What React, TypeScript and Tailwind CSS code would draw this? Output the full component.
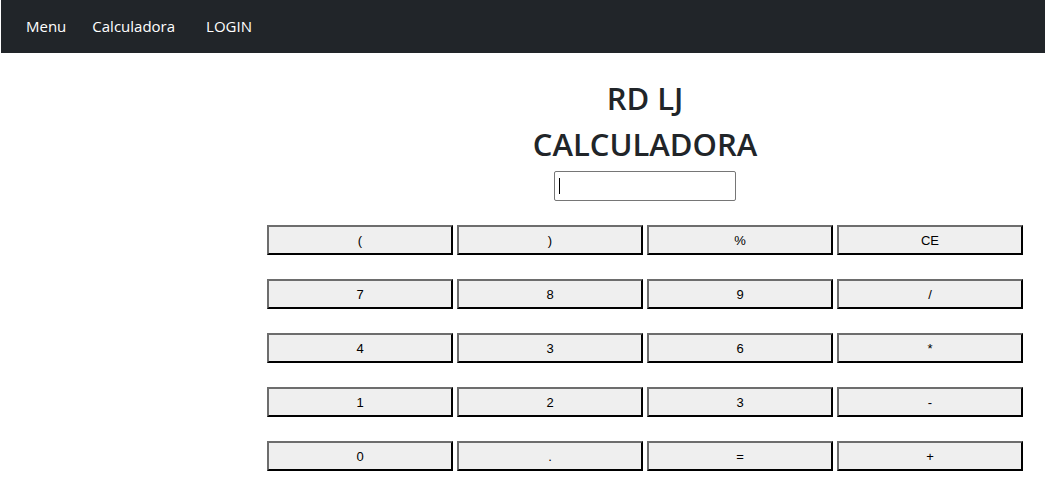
import React from "react";

const rows = [
  ["(", ")", "%", "CE"],
  ["7", "8", "9", "/"],
  ["4", "3", "6", "*"],
  ["1", "2", "3", "-"],
  ["0", ".", "=", "+"],
];

export default function App() {
  return (
    <div className="min-h-[493px] bg-white" style={{ fontFamily: "'Open Sans', 'Noto Sans', sans-serif" }}>
      <nav className="ml-px h-[53px] bg-[#212529] flex items-center text-[15px] text-white">
        <span className="ml-[25px]">Menu</span>
        <span className="ml-[26px]">Calculadora</span>
        <span className="ml-[31px]">LOGIN</span>
      </nav>
      <div className="ml-[267px] w-[756px] flex flex-col items-center">
        <h1 className="mt-[22px] text-[31px] leading-[46px] font-semibold text-[#212529] text-center">
          <div>RD LJ</div>
          <div>CALCULADORA</div>
        </h1>
        <div className="relative mt-[4px]">
          <input
            className="block w-[182px] h-[30px] border border-[#767676] rounded-[2px] bg-white outline-none"
            defaultValue=""
          />
          <div className="absolute left-[5px] top-[7px] w-px h-[16px] bg-black" />
        </div>
        <div className="w-full">
          {rows.map((r, i) => (
            <div key={i} className="mt-[24px] grid grid-cols-4 gap-[4px]">
              {r.map((k, j) => (
                <button
                  key={j}
                  className="h-[30px] pt-px bg-[#efefef] border-2 border-t-[#6d6d6d] border-l-[#6d6d6d] border-b-black border-r-black text-[13px] text-black"
                  style={{ fontFamily: "'Liberation Sans', Arial, sans-serif" }}
                >
                  {k}
                </button>
              ))}
            </div>
          ))}
        </div>
      </div>
    </div>
  );
}
